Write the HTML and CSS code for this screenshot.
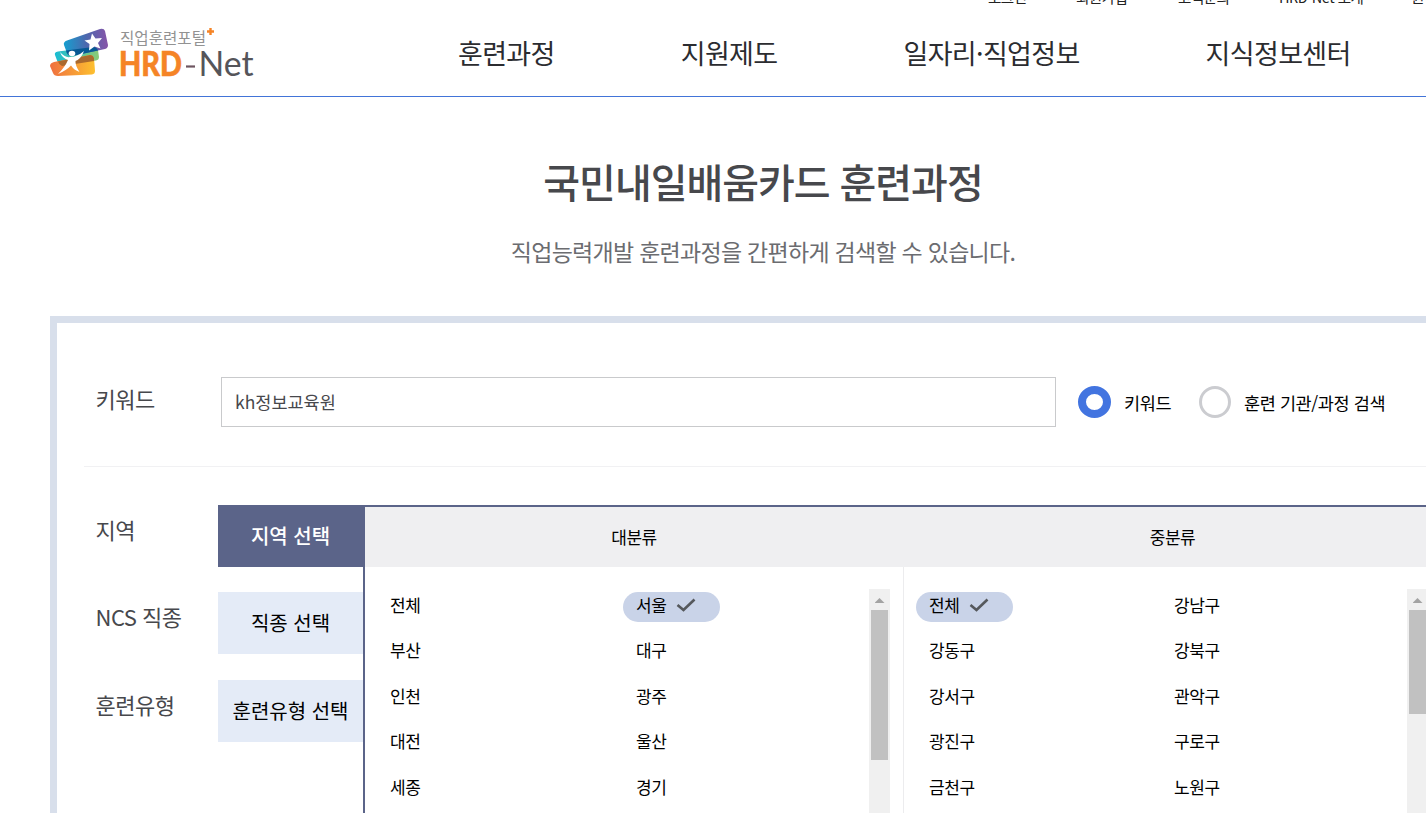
FILE: index.html
```html
<!DOCTYPE html>
<html lang="ko">
<head>
<meta charset="utf-8">
<title>HRD-Net 국민내일배움카드 훈련과정</title>
<link rel="stylesheet" href="styles.css">
</head>
<body>
<header class="header">
  <a class="logo">
    <svg width="206" height="54" viewBox="0 0 206 54">
      <defs>
        <linearGradient id="sky" x1="0" y1="0" x2="1" y2="0"><stop offset="0" stop-color="#169fd0"/><stop offset=".5" stop-color="#4b68ae"/><stop offset="1" stop-color="#8754a8"/></linearGradient>
        <linearGradient id="sea" x1="0" y1="0" x2="1" y2="0"><stop offset="0" stop-color="#18bcd4"/><stop offset="1" stop-color="#8ccb75"/></linearGradient>
        <linearGradient id="sun" x1="0" y1="0" x2="1" y2="0"><stop offset="0" stop-color="#ef7040"/><stop offset="1" stop-color="#fdc02f"/></linearGradient>
      </defs>
      <path d="M5 27Q4 24 8 23.500L43 19Q47 19 48 22L49 29Q49 32 46 32.500L12 38Q9 38 8 35Z" fill="url(#sea)"/>
      <path d="M14 17Q13 14 17 12.500L50 1Q54 0 55 3L58 17Q58 20 55 21L22 28Q18 28 17 25Z" fill="url(#sky)"/>
      <path d="M16 22.500L43 19Q47 19 48 22.500L22 28Q17 28 16 22.500Z" fill="#075993"/>
      <path d="M0 38Q0 35 4 34L40 27Q43 27 44 30L45 43Q45 46 42 46.500L8 48Q4 48 3 45Z" fill="url(#sun)"/>
      <path d="M8 33.500L40 27Q43 27 44 30V33L12 38Q9 37 8 33.500Z" fill="#aa692d"/>
      <path d="M42 5.500L45.500 10.500L52 10L48 15L50.500 20.500L44.500 18.500L39 22.500L39.500 16L34.500 12.500L40.500 11.500Z" fill="#fff"/>
      <ellipse cx="22" cy="25.500" rx="3.300" ry="2.800" fill="#fff"/>
      <path d="M10 24Q15 30 20 29Q27 29 34 23Q31 31 25.500 33Q25 37 29.500 44Q24 42 21 37.500Q17 42 8 46Q15 39 18 32Q12 30 10 24Z" fill="#fff"/>
      <text class="logo-sub" x="70" y="15.500" textLength="86" lengthAdjust="spacingAndGlyphs">직업훈련포털</text>
      <path d="M160.500 0V7M157 3.500H164" stroke="#f58426" stroke-width="2.400"/>
      <text class="logo-hrd" x="69" y="47.500" textLength="63" lengthAdjust="spacingAndGlyphs">HRD</text>
      <path d="M136 38.500H145" stroke="#6d5560" stroke-width="2.200"/>
      <text class="logo-net" x="148.500" y="47.500" textLength="55" lengthAdjust="spacingAndGlyphs">Net</text>
    </svg>
  </a>
  <div class="header-main">
    <ul class="util"><li>로그인</li><li>회원가입</li><li>고객문의</li><li>HRD-Net 소개</li><li>원격</li></ul>
    <ul class="nav"><li>훈련과정</li><li>지원제도</li><li>일자리·직업정보</li><li>지식정보센터</li></ul>
  </div>
</header>
<main class="main">
  <h1 class="title">국민내일배움카드 훈련과정</h1>
  <p class="subtitle">직업능력개발 훈련과정을 간편하게 검색할 수 있습니다.</p>
  <section class="search">
    <div class="keyword-row">
      <label class="label keyword-label">키워드</label>
      <div class="keyword-input">kh정보교육원</div>
      <span class="radio radio-on"></span><span class="radio-text first">키워드</span>
      <span class="radio"></span><span class="radio-text">훈련 기관/과정 검색</span>
    </div>
    <div class="filters">
      <div class="labels"><span class="label">지역</span><span class="label">NCS 직종</span><span class="label">훈련유형</span></div>
      <div class="tabs"><span class="tab active">지역 선택</span><span class="tab">직종 선택</span><span class="tab">훈련유형 선택</span></div>
      <div class="panel">
        <div class="panel-head"><span>대분류</span><span>중분류</span></div>
        <div class="panel-body">
          <div class="group">
            <ul class="options">
              <li>전체</li><li><span class="picked">서울<svg width="20" height="16" viewBox="0 0 20 16"><path d="M1.500 8L7.500 13L18.500 2.500" fill="none" stroke="#55585c" stroke-width="2.600"/></svg></span></li>
              <li>부산</li><li>대구</li><li>인천</li><li>광주</li><li>대전</li><li>울산</li><li>세종</li><li>경기</li>
            </ul>
            <div class="scroll"><i class="arrow"></i><i class="thumb"></i></div>
          </div>
          <div class="group second">
            <ul class="options">
              <li><span class="picked">전체<svg width="20" height="16" viewBox="0 0 20 16"><path d="M1.500 8L7.500 13L18.500 2.500" fill="none" stroke="#55585c" stroke-width="2.600"/></svg></span></li><li>강남구</li>
              <li>강동구</li><li>강북구</li><li>강서구</li><li>관악구</li><li>광진구</li><li>구로구</li><li>금천구</li><li>노원구</li>
            </ul>
            <div class="scroll"><i class="arrow"></i><i class="thumb short"></i></div>
          </div>
        </div>
      </div>
    </div>
  </section>
</main>
</body>
</html>
```
FILE: styles.css
```css
* { box-sizing: border-box; margin: 0; padding: 0; }
html { overflow: hidden; height: 813px; }
body { width: 1426px; height: 813px; overflow: hidden; background: #fff; color: #000; font-family: "Noto Sans CJK KR", sans-serif; white-space: nowrap; }
ul { list-style: none; }
.header { display: flex; height: 97px; border-bottom: 1px solid #4274d8; padding-left: 50px; }
.logo { width: 408px; padding-top: 28px; }
.logo svg { display: block; overflow: visible; }
.logo-sub { font-size: 16px; fill: #929292; }
.logo-hrd { font: 900 34.500px Lato, sans-serif; fill: #f58426; stroke: #f58426; stroke-width: 0.6px; }
.logo-net { font: 400 34.500px Lato, sans-serif; fill: #55555a; }
.header-main { flex: 1; min-width: 0; }
.util { display: flex; height: 24px; margin-top: -13px; padding-left: 530px; font-size: 14.500px; line-height: 19px; letter-spacing: -0.5px; color: #222; }
.util li { flex: none; }
.util li:nth-child(1) { width: 88px; }
.util li:nth-child(2) { width: 102px; }
.util li:nth-child(3) { width: 101px; }
.util li:nth-child(4) { width: 132px; }
.nav { display: flex; gap: 126px; padding-top: 20px; font-size: 27px; line-height: 44px; letter-spacing: -0.66px; color: #2b2c30; }
.main { padding-left: 50px; }
.title { width: 1426px; padding-top: 54px; text-align: center; font-size: 40px; line-height: 60px; font-weight: 500; letter-spacing: -1.04px; color: #47484c; }
.subtitle { width: 1426px; padding-top: 22px; text-align: center; font-size: 23px; line-height: 36px; letter-spacing: -0.72px; color: #6b6c70; }
.search { width: 1426px; height: 497px; overflow: hidden; margin-top: 47px; border: 7px solid #d8dfeb; border-bottom: 0; padding: 54px 0 0 27px; }
.label { font-size: 22px; line-height: 34px; letter-spacing: -0.5px; color: #47484c; }
.keyword-row { display: flex; height: 90px; border-bottom: 1px solid #f1f1f3; padding-left: 11.500px; }
.keyword-label { width: 125.500px; padding-top: 4px; }
.keyword-input { width: 835px; height: 50px; border: 1px solid #c9cacc; padding-left: 13px; font-size: 17.500px; line-height: 48px; color: #47484c; }
.radio { width: 32px; height: 32px; margin-top: 9px; border: 3px solid #cbccd0; border-radius: 50%; }
.radio-on { width: 33px; margin-left: 22px; border: 8px solid #4274e0; }
.radio-text { margin-left: 13px; padding-top: 1px; font-size: 17.500px; line-height: 50px; letter-spacing: -0.4px; }
.radio-text.first { width: 75px; }
.filters { display: flex; padding: 38px 0 0 11.500px; }
.labels { display: flex; flex-direction: column; width: 122.500px; gap: 53.500px; padding-top: 6.500px; }
.tabs { width: 145px; display: flex; flex-direction: column; gap: 26px; }
.tab { height: 62px; background: #e4ebf7; text-align: center; font-size: 20px; line-height: 62px; }
.tab.active { margin-bottom: -1px; background: #5b6489; color: #fff; font-weight: 500; }
.panel { width: 1081px; flex: none; height: 308px; border: 2px solid #5b6489; border-bottom: 0; font-size: 17px; letter-spacing: -0.43px; background: #fff; }
.panel-head { display: grid; grid-template-columns: 538px 539px; height: 60px; background: #efeff1; text-align: center; line-height: 60px; }
.panel-body { display: grid; grid-template-columns: 538px 539px; }
.group { display: flex; height: 246px; }
.second { border-left: 1px solid #ececee; }
.options { display: grid; width: 504px; grid-template-columns: 246px 1fr; grid-auto-rows: 45.500px; align-content: start; padding: 14.900px 0 0 25px; line-height: 45px; }
.second .options { width: 503px; grid-template-columns: 245px 1fr; }
.picked { display: flex; align-items: center; width: 97px; height: 30px; margin: 10.100px 0 0 -13px; padding: 0 0 4px 13px; border-radius: 15px; background: #c9d3e8; line-height: 26px; }
.picked svg { margin-left: 10px; }
.scroll { width: 21px; height: 224px; margin-top: 22px; background: #f0f0f0; display: flex; flex-direction: column; align-items: center; }
.arrow { height: 21px; width: 10px; background: #a3a3a3; clip-path: polygon(50% 9px, 100% 14px, 0 14px); }
.thumb { width: 17px; height: 150px; background: #c1c1c1; }
.thumb.short { height: 104px; }
```
